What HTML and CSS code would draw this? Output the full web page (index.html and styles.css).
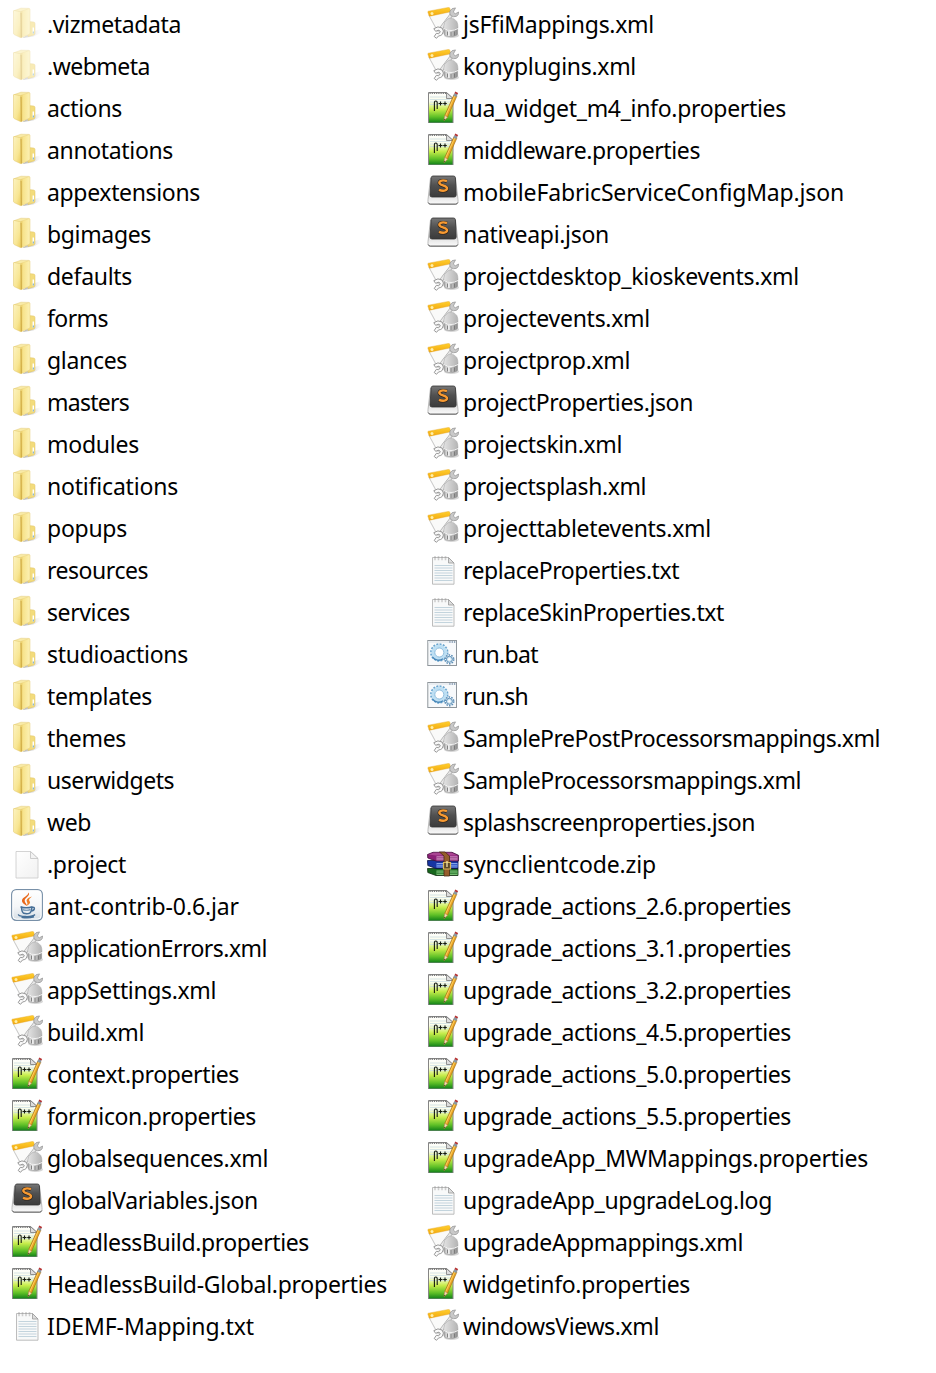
FILE: index.html
```html
<!DOCTYPE html>
<html lang="en">
<head>
<meta charset="utf-8">
<title>Files</title>
<link rel="stylesheet" href="styles.css">
</head>
<body>
<svg class="defs" aria-hidden="true">
  <defs>
    <linearGradient id="gFlap" x1="0" x2="1" y1="0" y2="1"><stop offset="0" stop-color="#fcf3c0"/><stop offset=".6" stop-color="#f8e694"/><stop offset="1" stop-color="#eaca58"/></linearGradient>
    <linearGradient id="gInner" x1="0" x2="1" y1="0" y2="0"><stop offset="0" stop-color="#e3c45a"/><stop offset=".3" stop-color="#f7e38c"/><stop offset="1" stop-color="#fcf1b4"/></linearGradient>
    <linearGradient id="gShade" x1="0" x2="1" y1="0" y2="0"><stop offset="0" stop-color="#777" stop-opacity=".6"/><stop offset="1" stop-color="#aaa" stop-opacity="0"/></linearGradient>
    <linearGradient id="gGreen" x1="0" x2="0" y1="0" y2="1"><stop offset="0" stop-color="#fff"/><stop offset=".3" stop-color="#fbfde8"/><stop offset=".55" stop-color="#c8ed4c"/><stop offset=".8" stop-color="#5fc027"/><stop offset="1" stop-color="#0c7d18"/></linearGradient>
    <linearGradient id="gMetal" x1="0" x2="1" y1="0" y2="0"><stop offset="0" stop-color="#a5a5a5"/><stop offset=".3" stop-color="#f3f3f3"/><stop offset=".65" stop-color="#b4b4b4"/><stop offset="1" stop-color="#8b8b8b"/></linearGradient>
    <linearGradient id="gDome" x1="0" x2="1" y1="0" y2="0"><stop offset="0" stop-color="#e3e3e3"/><stop offset="1" stop-color="#b4b4b4"/></linearGradient>
    <linearGradient id="gPaper" x1="0" x2="1" y1="0" y2="1"><stop offset="0" stop-color="#fff"/><stop offset="1" stop-color="#f1f1f1"/></linearGradient>
    <linearGradient id="gJar" x1="0" x2="0" y1="0" y2="1"><stop offset="0" stop-color="#fff"/><stop offset=".55" stop-color="#f4f6f8"/><stop offset="1" stop-color="#d5dde4"/></linearGradient>
    <linearGradient id="gKey" x1="0" x2="0" y1="0" y2="1"><stop offset="0" stop-color="#777"/><stop offset=".45" stop-color="#505050"/><stop offset="1" stop-color="#3b3b3b"/></linearGradient>
    <linearGradient id="gBase" x1="0" x2="0" y1="0" y2="1"><stop offset="0" stop-color="#aaa"/><stop offset="1" stop-color="#fafafa"/></linearGradient>
    <linearGradient id="gBar" x1="0" x2="0" y1="0" y2="1"><stop offset="0" stop-color="#ffd02e"/><stop offset="1" stop-color="#f2a70f"/></linearGradient>
  </defs>

  <symbol id="folder" viewBox="-1 0 32 32">
    <path d="M19 25l10.500-3v3.500l-8 4-11 1.500z" fill="url(#gShade)"/>
    <path d="M16 14.500l5.500.5q1.500.2 1.500 1.500v10q0 1-1 1.400l-6 1.600z" fill="#f3dc7c" stroke="#dec163" stroke-width=".5"/>
    <path d="M1.700 3.800 9 1.200l7.700.2q1 .1 1 1V27L9 30z" fill="#f8eaa6" stroke="#e3cb78" stroke-width=".5"/>
    <path d="M8.300 4.500 17 1.700q.9-.2.900.8V26q0 1-.8 1.300l-8 3.400z" fill="url(#gInner)" stroke="#e8d07a" stroke-width=".4"/>
    <path d="M1.500 4.300q0-1 1-.8l5 1q1.300.4 1.300 1.800l.5 23.200q0 1.400-1 1l-5.800-2.800q-1-.5-1-1.500z" fill="url(#gFlap)" stroke="#e0c468" stroke-width=".5"/>
    <path d="M9 6l.3 24.400" stroke="#c9a33a" stroke-width=".9"/>
    <path d="M21.300 20.500v6" stroke="#fff" stroke-width="1.500"/>
    <path d="M21.300 24.500v2" stroke="#70a5c4" stroke-width="1"/>
  </symbol>

  <symbol id="blank" viewBox="0 0 32 32">
    <path d="M5 4.500h14.500l7.500 7V31H5z" fill="url(#gPaper)" stroke="#c9c9c9" stroke-width=".8"/>
    <path d="M19.500 4.500v7H27z" fill="#f3f3f3" stroke="#c2c2c2" stroke-width=".8"/>
  </symbol>

  <symbol id="text" viewBox="0 0 32 32">
    <path d="M5.500 4.500h16l5.500 5.500v21.200H5.500z" fill="#f8f9f9" stroke="#b5b5b5" stroke-width=".9"/>
    <path d="M21.500 4.500V10H27z" fill="#ddd" stroke="#999" stroke-width=".8"/>
    <path d="M7.500 12.500h18M7.500 15h18M7.500 17.500h18M7.500 20h18M7.500 22.500h18M7.500 25h18M7.500 27.500h18" stroke="#c3d4dd" stroke-width="1.100"/>
    <path d="M8 5.500v-2M11.500 5.500v-2M15 5.500v-2M18.500 5.500v-2" stroke="#aaa" stroke-width="1.700"/>
    <path d="M8 7.300v-1.300M11.500 7.300v-1.300M15 7.300v-1.300M18.500 7.300v-1.300" stroke="#ccc" stroke-width="1.500"/>
  </symbol>

  <symbol id="jar" viewBox="0 0 32 32">
    <rect x=".7" y=".7" width="30.600" height="30.600" rx="4.500" fill="url(#gJar)" stroke="#7890a8" stroke-width="1.300"/>
    <rect x="1.900" y="1.900" width="28.200" height="28.200" rx="3.500" fill="none" stroke="#fff"/>
    <path d="M17.500 3.500c2.500 3.500-4.300 5-3.800 8.500.2 2 2.300 3 2.300 5-2-1.500-5.200-3-5-5.600C11.300 8 17 7.500 17.500 3.500z" fill="#e8671b"/>
    <path d="M21 7.500c-4 1.300-6 3-5.200 5 .6 1.200 1.200 2.200-.1 4.200 4.300-2 3.500-3.600 2.600-4.900-.8-1.300.6-2.500 2.700-4.300z" fill="#f07e25"/>
    <path d="M9.500 17.700c3 1.300 8.500 1.200 12 0M10.500 18.500c.3 4 1 5.200 2.200 5.800 2 .6 4.500.5 6-.2 1.200-.8 1.900-2.100 2.200-5.600M21 18.300c3.200-1 3.500 3.300-1.200 3.900" fill="none" stroke="#466f97" stroke-width="1.500"/>
    <path d="M11.500 20.600c2.500.8 5.500.8 8 0" fill="none" stroke="#6489aa" stroke-width="1.200"/>
    <path d="M7.500 25.300c-1 2.500 14 3.300 16.500.2M10.500 28.300c4 .8 9 .6 12.500-.5" fill="none" stroke="#466f97" stroke-width="1.300"/>
  </symbol>

  <symbol id="xml" viewBox="0 0 32 32">
    <path d="M2 8 23.500 4l2 10-8 12-7-1z" fill="#ededec" stroke="#cfcfcf" stroke-width=".5"/>
    <path d="M2.500 8.500 10 22l2.500-1L22 8V5z" fill="#fafaf9"/>
    <path d="M2 8.500 9.500 22" stroke="#cacaca" stroke-width=".9"/>
    <path d="M1.300 4.200 21.500.4q1-.1 1.300.8l.9 3.600L2.900 9.200q-.7.100-.9-.6L.9 5.200q-.2-.8.4-1z" fill="url(#gBar)" stroke="#e2a423" stroke-width=".4"/>
    <circle cx="5" cy="6.400" r="1.500" fill="#fff0a8"/>
    <ellipse cx="24.500" cy="28.500" rx="7.500" ry="2.500" fill="#999" opacity=".4"/>
    <path d="M17 20v7.200q1 1.500 3.300 2.100 3.900.8 7.400-.3 2-.7 2.900-1.800V20z" fill="url(#gMetal)" stroke="#8a8a8a" stroke-width=".5"/>
    <path d="M11.500 24.500 25 7" stroke="#a2a2a2" stroke-width="3.600"/>
    <path d="M11.500 24.500 25 7" stroke="#e8e8e8" stroke-width="2.400"/>
    <path d="M28.500.9q-4.200.1-5.500 3.100-.8 2 .7 4.500 2.800 2.200 6 .7 2-1.200 1.900-4.200l-3.300 1.800-2-1.700z" fill="#c9c9c9" stroke="#929292" stroke-width=".7"/>
    <path d="M16.500 20.500q.3-6 4-8.500 5-3 9.300 2.500 1.200 2.500 1.200 6-2.500 3-7.300 3t-7.200-3z" fill="url(#gDome)" stroke="#a2a2a2" stroke-width=".5"/>
    <path d="M20.500 24.500v4M24 25v4M27.500 24.500v4" stroke="#777" stroke-width=".9"/>
    <path d="M17 21.500q7 4 14 0" stroke="#f6f6f6" stroke-width="1" fill="none"/>
    <path d="M6.800 21.700q4.200-3.300 8.200-.7 2.700 3 .3 6.300-1.300 1.500-3.800 1.700l-2 2.300-2.300-1.800 2.200-3.200 2.300.5 1.600-2-1.300-1.700-3.400 1.200z" fill="#fafafa" stroke="#8c8c8c" stroke-width=".9"/>
  </symbol>

  <symbol id="props" viewBox="0 0 32 32">
    <path d="M1.500 1.500h18l6.500 6V32H1.500z" fill="url(#gGreen)" stroke="#858585" stroke-width="1"/>
    <path d="M3 6h16M3 8.500h20M3 11h21M3 13.500h21" stroke="#c6dae3" stroke-width=".7"/>
    <path d="M2.500 2.300h17" stroke="#777" stroke-width="1.500" stroke-dasharray="1.200 1"/>
    <path d="M19.500 1.500v6H26z" fill="#ddd" stroke="#777" stroke-width=".8"/>
    <path d="M7.400 20v-8.500c0-2 2.800-2 2.800 0V18M11.500 12.500h4M13.500 10.500v4M16.200 12.500h3.600M18 10.500v4" fill="none" stroke="#151a10" stroke-width="1.100"/>
    <path d="M17 29.500l.8-5L27 3.500l3 1.300-9.500 21.400z" fill="#e9a526" stroke="#9b6511" stroke-width=".6"/>
    <path d="M18.800 24.500 28 4.300" stroke="#ffd264" stroke-width=".9"/>
    <path d="M17 29.500l.8-5 2.700 1.700z" fill="#f3dfb7" stroke="#a88a5a" stroke-width=".4"/>
    <path d="M17 29.500l.3-1.700 1 .6z" fill="#333"/>
    <path d="M26.300 4.800 27.500 2l3 1.300-1.200 2.800z" fill="#8998a4"/>
    <path d="M27.500 2.300 28.200.6l2.900 1.300-.7 1.700z" fill="#b63232"/>
  </symbol>

  <symbol id="json" viewBox="0 0 32 32">
    <path d="M3.500 3 1 24.500Q.5 29 3 29h26q2.500 0 2-4.500L28.500 3z" fill="url(#gBase)" stroke="#a5a5a5" stroke-width=".7"/>
    <path d="M1.200 27.500q.7 1.700 2 1.700h25.600q1.300 0 2-1.700" fill="none" stroke="#555" stroke-width=".9"/>
    <path d="M6 1h20.500q1.700 0 1.900 1.700l.8 17.300q0 2-2 2H5q-2 0-2-2L4.200 2.700Q4.400 1 6 1z" fill="url(#gKey)" stroke="#333" stroke-width=".8"/>
    <path d="M20 6.300c-4-1.300-7.700-.7-7.700 1.700 0 3 7.700 2.200 7.700 5.500 0 2.600-4.300 3-8 1.600" fill="none" stroke="#2c2118" stroke-width="3.400"/>
    <path d="M20 6.100c-4-1.300-7.700-.7-7.700 1.700 0 3 7.700 2.200 7.700 5.500 0 2.600-4.300 3-8 1.600" fill="none" stroke="#f79a32" stroke-width="2.400"/>
  </symbol>

  <symbol id="script" viewBox="0 0 32 32">
    <rect x=".8" y="3.500" width="28.700" height="25" fill="#f7f9fb" stroke="#8f969c" stroke-width="1"/>
    <path d="M1.300 5h27.700" stroke="#e9edf1" stroke-width="2"/>
    <path d="M22.300 5h1.200M24.700 5h1.200M27 5h1.200" stroke="#43668a" stroke-width="1.200"/>
    <circle cx="12.300" cy="15.500" r="8.200" fill="none" stroke="#6ba6cf" stroke-width="2" stroke-dasharray="2 1.220"/>
    <circle cx="12.300" cy="15.500" r="6.200" fill="none" stroke="#bddff3" stroke-width="3.200"/>
    <circle cx="12.300" cy="15.500" r="4.500" fill="#fff" stroke="#76aed5" stroke-width=".8"/>
    <path d="M16 21.700c-3 2.500-8 2-10.500-1.500" fill="none" stroke="#4686b8" stroke-width="1.300"/>
    <circle cx="22.400" cy="22.300" r="4.300" fill="#fff" stroke="#5d8fb7" stroke-width="1.600" stroke-dasharray="1.600 1.100"/>
    <circle cx="22.400" cy="22.300" r="3" fill="#d1e6f2" stroke="#5d8fb7" stroke-width="1"/>
    <circle cx="22.400" cy="22.300" r="1.200" fill="#fff"/>
  </symbol>

  <symbol id="zip" viewBox="0 0 32 32">
    <path d="M.5 21.500h30.500V28.500H9L.8 25.500z" fill="#17671d" stroke="#102c10" stroke-width=".8"/>
    <path d="M9.500 23.500h21v4.500h-21z" fill="#7fc57a"/><path d="M9.500 25h21M9.500 26.600h21" stroke="#23722b" stroke-width=".8"/>
    <path d="M.5 13.500h30.500V21.500H9L.8 18.500z" fill="#1735a2" stroke="#0c1344" stroke-width=".8"/>
    <path d="M9.500 16h21v4.500h-21z" fill="#86a5ea"/><path d="M9.500 17.500h21M9.500 19.100h21" stroke="#2248c0" stroke-width=".8"/>
    <path d="M.5 7.500 6 5.300h19l6.500 3V14H9L.8 11z" fill="#8b2077" stroke="#3f1038" stroke-width=".8"/>
    <path d="M1.500 7.500 6.500 5.700h18L30.500 8.500H9z" fill="#aa4593"/>
    <path d="M9.500 9.300h21v4h-21z" fill="#d390c4"/><path d="M9.500 10.600h21M9.500 12.100h21" stroke="#8e357e" stroke-width=".7"/>
    <path d="M12.500 5h5.500l4.500 4v20h-5.500V9z" fill="#965d2c" stroke="#4a2b15" stroke-width=".8"/>
    <path d="M16.500 15.500h7v6.500h-7z" fill="#5c4727" stroke="#d9b955" stroke-width="1.200"/>
    <path d="M20 14v6" stroke="#f3e5aa" stroke-width="1.300"/>
  </symbol>
</svg>

<main class="files" id="files"></main>
<script src="files.js"></script>
</body>
</html>
```

FILE: styles.css
```css
body {
  margin: 0;
  background: #fff;
  color: #000;
  font-family: "Noto Sans", "Open Sans", sans-serif;
  font-size: 23px;
}

.defs {
  position: absolute;
  width: 0;
  height: 0;
}

.files {
  display: grid;
  grid-template-columns: 416px 500px;
  grid-template-rows: repeat(32, 42px);
  grid-auto-flow: column;
  padding-left: 11px;
}

.file {
  display: flex;
  align-items: flex-start;
  gap: 4px;
  height: 42px;
}

.icon {
  flex: none;
  width: 32px;
  height: 32px;
  margin-top: 7px;
}

.hidden .icon {
  opacity: 0.55;
}

.name {
  white-space: nowrap;
  line-height: 42px;
  padding-top: 3px;
}
```

FILE: files.js
```js
// [icon, name, label width in px]
const files = [
  ["folder", ".vizmetadata", 134, true],
  ["folder", ".webmeta", 103, true],
  ["folder", "actions", 75],
  ["folder", "annotations", 126],
  ["folder", "appextensions", 153],
  ["folder", "bgimages", 104],
  ["folder", "defaults", 85],
  ["folder", "forms", 61],
  ["folder", "glances", 80],
  ["folder", "masters", 82],
  ["folder", "modules", 92],
  ["folder", "notifications", 131],
  ["folder", "popups", 80],
  ["folder", "resources", 101],
  ["folder", "services", 83],
  ["folder", "studioactions", 141],
  ["folder", "templates", 105],
  ["folder", "themes", 79],
  ["folder", "userwidgets", 127],
  ["folder", "web", 44],
  ["blank", ".project", 79],
  ["jar", "ant-contrib-0.6.jar", 192],
  ["xml", "applicationErrors.xml", 220],
  ["xml", "appSettings.xml", 169],
  ["xml", "build.xml", 97],
  ["props", "context.properties", 192],
  ["props", "formicon.properties", 209],
  ["xml", "globalsequences.xml", 221],
  ["json", "globalVariables.json", 211],
  ["props", "HeadlessBuild.properties", 262],
  ["props", "HeadlessBuild-Global.properties", 340],
  ["text", "IDEMF-Mapping.txt", 207],
  ["xml", "jsFfiMappings.xml", 191],
  ["xml", "konyplugins.xml", 173],
  ["props", "lua_widget_m4_info.properties", 323],
  ["props", "middleware.properties", 237],
  ["json", "mobileFabricServiceConfigMap.json", 381],
  ["json", "nativeapi.json", 146],
  ["xml", "projectdesktop_kioskevents.xml", 336],
  ["xml", "projectevents.xml", 187],
  ["xml", "projectprop.xml", 167],
  ["json", "projectProperties.json", 230],
  ["xml", "projectskin.xml", 159],
  ["xml", "projectsplash.xml", 183],
  ["xml", "projecttabletevents.xml", 248],
  ["text", "replaceProperties.txt", 216],
  ["text", "replaceSkinProperties.txt", 261],
  ["script", "run.bat", 75],
  ["script", "run.sh", 65],
  ["xml", "SamplePrePostProcessorsmappings.xml", 417],
  ["xml", "SampleProcessorsmappings.xml", 338],
  ["json", "splashscreenproperties.json", 292],
  ["zip", "syncclientcode.zip", 193],
  ["props", "upgrade_actions_2.6.properties", 328],
  ["props", "upgrade_actions_3.1.properties", 328],
  ["props", "upgrade_actions_3.2.properties", 328],
  ["props", "upgrade_actions_4.5.properties", 328],
  ["props", "upgrade_actions_5.0.properties", 328],
  ["props", "upgrade_actions_5.5.properties", 328],
  ["props", "upgradeApp_MWMappings.properties", 405],
  ["text", "upgradeApp_upgradeLog.log", 309],
  ["xml", "upgradeAppmappings.xml", 280],
  ["props", "widgetinfo.properties", 227],
  ["xml", "windowsViews.xml", 196]
];

const list = document.getElementById("files");
for (const [icon, name, width, hidden] of files) {
  const row = document.createElement("div");
  row.className = hidden ? "file hidden" : "file";
  row.innerHTML = `<svg class="icon"><use href="#${icon}"/></svg><span class="name"></span>`;
  const label = row.querySelector(".name");
  label.textContent = name;
  list.append(row);
  // Track each label so that it fills its width.
  const spacing = (width - label.getBoundingClientRect().width) / name.length;
  label.style.letterSpacing = spacing.toFixed(3) + "px";
}
```
